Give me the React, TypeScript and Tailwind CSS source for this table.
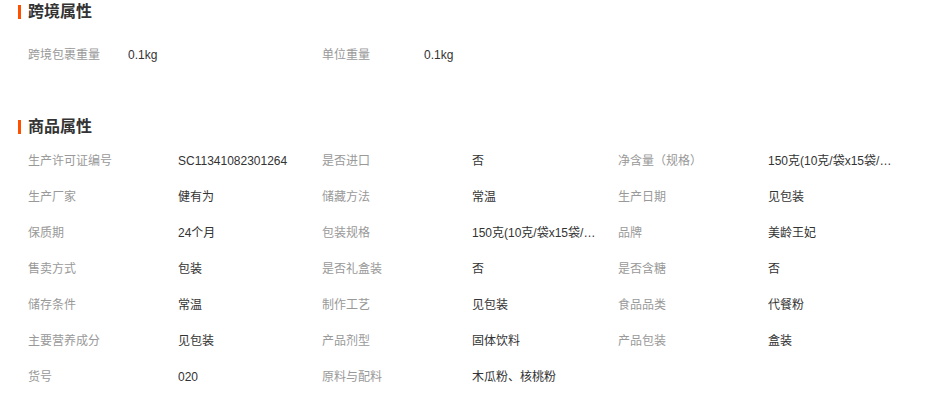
import React from "react";

const font = { fontFamily: '"Liberation Sans", "Noto Sans CJK SC", sans-serif' };

const rows: [string, string][] = [
  ["生产许可证编号", "SC11341082301264"],
  ["是否进口", "否"],
  ["净含量（规格）", "150克(10克/袋x15袋/盒)"],
  ["生产厂家", "健有为"],
  ["储藏方法", "常温"],
  ["生产日期", "见包装"],
  ["保质期", "24个月"],
  ["包装规格", "150克(10克/袋x15袋/盒)"],
  ["品牌", "美龄王妃"],
  ["售卖方式", "包装"],
  ["是否礼盒装", "否"],
  ["是否含糖", "否"],
  ["储存条件", "常温"],
  ["制作工艺", "见包装"],
  ["食品品类", "代餐粉"],
  ["主要营养成分", "见包装"],
  ["产品剂型", "固体饮料"],
  ["产品包装", "盒装"],
  ["货号", "020"],
  ["原料与配料", "木瓜粉、核桃粉"],
];

function Title({ text }: { text: string }) {
  return (
    <div className="flex items-center h-[22px] pl-[18px]">
      <div className="w-[3px] h-[14px] bg-[#ff5000]" />
      <div className="ml-[7px] text-[16px] font-bold text-[#333] leading-[22px]">{text}</div>
    </div>
  );
}

export default function App() {
  return (
    <div className="w-[937px] h-[397px] bg-white overflow-hidden text-[12px] pt-[1px]" style={font}>
      <Title text="跨境属性" />
      <div className="grid grid-cols-[294px_294px] pl-[28px] mt-[14px]">
        <div className="flex h-[36px] items-center">
          <span className="w-[100px] text-[#999]">跨境包裹重量</span>
          <span className="text-[#333]">0.1kg</span>
        </div>
        <div className="flex h-[36px] items-center">
          <span className="w-[102px] text-[#999]">单位重量</span>
          <span className="text-[#333]">0.1kg</span>
        </div>
      </div>
      <div className="mt-[43px]">
        <Title text="商品属性" />
      </div>
      <div className="grid grid-cols-[294px_296px_295px] pl-[28px] mt-[5px]">
        {rows.map(([k, v], i) => (
          <div key={i} className="flex h-[36px] items-center">
            <span className="w-[150px] shrink-0 text-[#999]">{k}</span>
            <span className="w-[125px] overflow-hidden text-ellipsis whitespace-nowrap text-[#333]">{v}</span>
          </div>
        ))}
      </div>
    </div>
  );
}
